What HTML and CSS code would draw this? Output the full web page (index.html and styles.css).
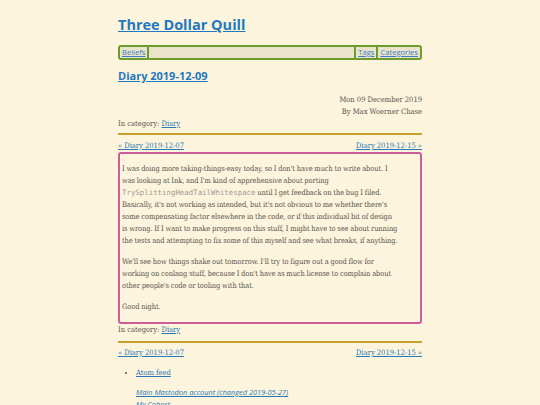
FILE: index.html
```html
<!DOCTYPE html>
<html>
<head>
<meta charset="utf-8">
<link rel="stylesheet" href="styles.css">
</head>
<body>
<div class="page">
  <h1 class="site-title"><a href="#">Three Dollar Quill</a></h1>
  <nav class="menu">
    <a href="#" class="menu-item first">Beliefs</a>
    <span class="menu-spacer"></span>
    <a href="#" class="menu-item sep">Tags</a>
    <a href="#" class="menu-item sep">Categories</a>
  </nav>
  <h2 class="post-title"><a href="#">Diary 2019-12-09</a></h2>
  <div class="meta">
    <div class="meta-right">Mon 09 December 2019</div>
    <div class="meta-right">By Max Woerner Chase</div>
    <div>In category: <a href="#">Diary</a></div>
  </div>
  <hr class="rule">
  <div class="pager">
    <a href="#">« Diary 2019-12-07</a>
    <a href="#">Diary 2019-12-15 »</a>
  </div>
  <article class="entry">
    <p>I was doing more taking-things-easy today, so I don't have much to write about. I<br>was looking at Ink, and I'm kind of apprehensive about porting<br><code>TrySplittingHeadTailWhitespace</code> until I get feedback on the bug I filed.<br>Basically, it's not working as intended, but it's not obvious to me whether there's<br>some compensating factor elsewhere in the code, or if this individual bit of design<br>is wrong. If I want to make progress on this stuff, I might have to see about running<br>the tests and attempting to fix some of this myself and see what breaks, if anything.</p>
    <p>We'll see how things shake out tomorrow. I'll try to figure out a good flow for<br>working on conlang stuff, because I don't have as much license to complain about<br>other people's code or tooling with that.</p>
    <p>Good night.</p>
  </article>
  <div class="meta after">In category: <a href="#">Diary</a></div>
  <hr class="rule rule-bottom">
  <div class="pager">
    <a href="#">« Diary 2019-12-07</a>
    <a href="#">Diary 2019-12-15 »</a>
  </div>
  <ul class="feeds">
    <li><a href="#">Atom feed</a></li>
  </ul>
  <div class="social">
    <a href="#">Main Mastodon account (changed 2019-05-27)</a>
    <a href="#">My Cohost</a>
  </div>
</div>
</body>
</html>
```

FILE: styles.css
```css
html, body {
  margin: 0;
  padding: 0;
  background: #fcf4dc;
}
body {
  font-family: "DejaVu Serif", serif;
  font-stretch: condensed;
  font-size: 7.5px;
  line-height: 12px;
  color: #5a5650;
}
a {
  color: #2a78b8;
}
.page {
  width: 304px;
  margin: 0 auto;
  padding-top: 14px;
}
.site-title {
  font-family: "Open Sans", sans-serif;
  font-stretch: normal;
  font-weight: 700;
  font-size: 14.5px;
  line-height: 22px;
  margin: 0 0 9px 0;
}
.site-title a, .post-title a {
  color: #1f78c1;
}
.menu {
  display: flex;
  align-items: stretch;
  border: 2px solid #6d9c2d;
  border-radius: 3px;
  background: #ebe4cd;
  height: 11px;
  font-family: "Open Sans", sans-serif;
  font-stretch: normal;
  font-size: 7.6px;
  line-height: 11px;
}
.menu-item {
  padding: 0 2px;
  color: #3d7dc0;
}
.menu-item.first {
  border-right: 2px solid #6d9c2d;
}
.menu-item.sep {
  border-left: 2px solid #6d9c2d;
}
.menu-spacer {
  flex: 1;
}
.post-title {
  font-family: "Open Sans", sans-serif;
  font-stretch: normal;
  font-weight: 700;
  font-size: 11px;
  line-height: 16px;
  margin: 8px 0 10px 0;
}
.meta-right {
  text-align: right;
}
.rule {
  border: 0;
  height: 2px;
  background: #c9a12c;
  margin: 3px 0 5px 0;
}
.rule.rule-bottom {
  margin: 5px 0 4px 0;
}
.pager {
  display: flex;
  justify-content: space-between;
  line-height: 11px;
}
.entry {
  border: 2px solid #c95e9b;
  border-radius: 3px;
  padding: 0 2px 0 2px;
  margin-top: 1px;
  font-size: 7.45px;
  letter-spacing: -0.08px;
  word-spacing: -0.2px;
}
.entry p {
  margin: 9px 0;
}
code {
  font-family: "DejaVu Sans Mono", monospace;
  font-stretch: normal;
  font-size: 7.4px;
  letter-spacing: 0;
  line-height: 1;
  color: #a09c96;
}
.feeds {
  margin: 9px 0 0 0;
  padding-left: 18px;
  line-height: 12px;
}
.social {
  display: flex;
  flex-direction: column;
  align-items: flex-start;
  padding-left: 18px;
  margin-top: 7px;
  font-style: italic;
  font-family: "Open Sans", sans-serif;
  font-stretch: normal;
  font-size: 7.4px;
}
```
